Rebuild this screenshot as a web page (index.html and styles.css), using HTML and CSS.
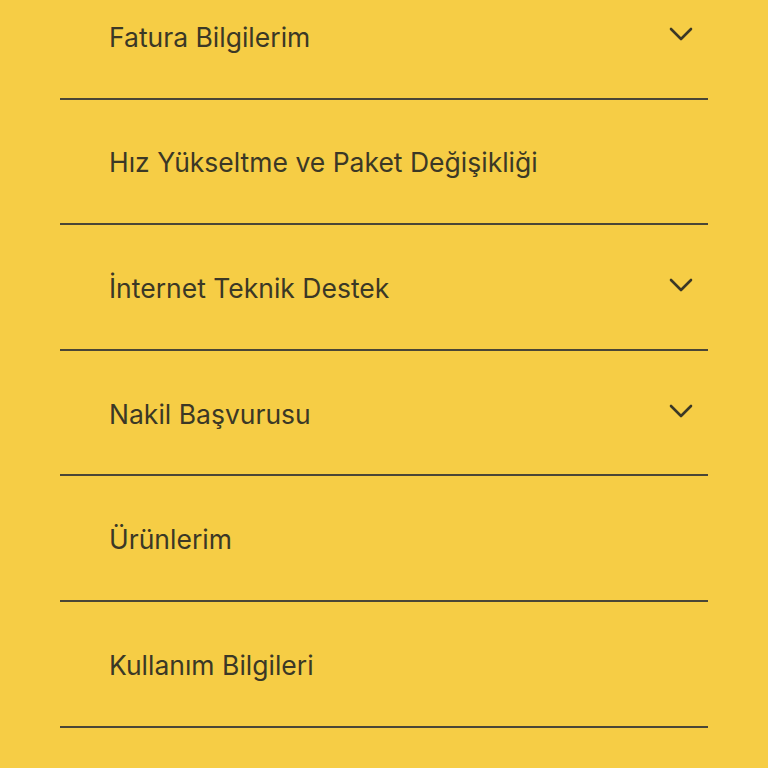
FILE: index.html
```html
<!DOCTYPE html>
<html lang="tr">
<head>
    <meta charset="UTF-8">
    <meta name="viewport" content="width=device-width, initial-scale=1.0">
    <title>Hesabım</title>
    <link rel="stylesheet" href="styles.css">
</head>
<body>
    <ul class="menu">
        <li class="menu-item">
            <span>Fatura Bilgilerim</span>
            <svg class="chevron" viewBox="0 0 24 14"><path d="M2 2l10 10 10-10"/></svg>
        </li>
        <li class="menu-item">
            <span>Hız Yükseltme ve Paket Değişikliği</span>
        </li>
        <li class="menu-item">
            <span>İnternet Teknik Destek</span>
            <svg class="chevron" viewBox="0 0 24 14"><path d="M2 2l10 10 10-10"/></svg>
        </li>
        <li class="menu-item">
            <span>Nakil Başvurusu</span>
            <svg class="chevron" viewBox="0 0 24 14"><path d="M2 2l10 10 10-10"/></svg>
        </li>
        <li class="menu-item">
            <span>Ürünlerim</span>
        </li>
        <li class="menu-item">
            <span>Kullanım Bilgileri</span>
        </li>
    </ul>
</body>
</html>
```

FILE: styles.css
```css
body {
    margin: 0;
    background-color: #f6cd45;
    font-family: Inter, "Open Sans", sans-serif;
    color: #3b3826;
    overflow: hidden;
}
.menu {
    list-style: none;
    margin: -26px 60px 0;
    padding: 0;
}
.menu-item {
    display: flex;
    align-items: center;
    justify-content: space-between;
    height: 123.6px;
    padding: 0 15px 0 49px;
    border-bottom: 2px solid #4a4636;
    font-size: 26.5px;
}
.menu-item span {
    margin-top: 2px;
}
.chevron {
    width: 24px;
    height: 14px;
    margin-top: -4px;
    fill: none;
    stroke: #3b3826;
    stroke-width: 2.6;
    stroke-linecap: round;
    stroke-linejoin: round;
}
```
